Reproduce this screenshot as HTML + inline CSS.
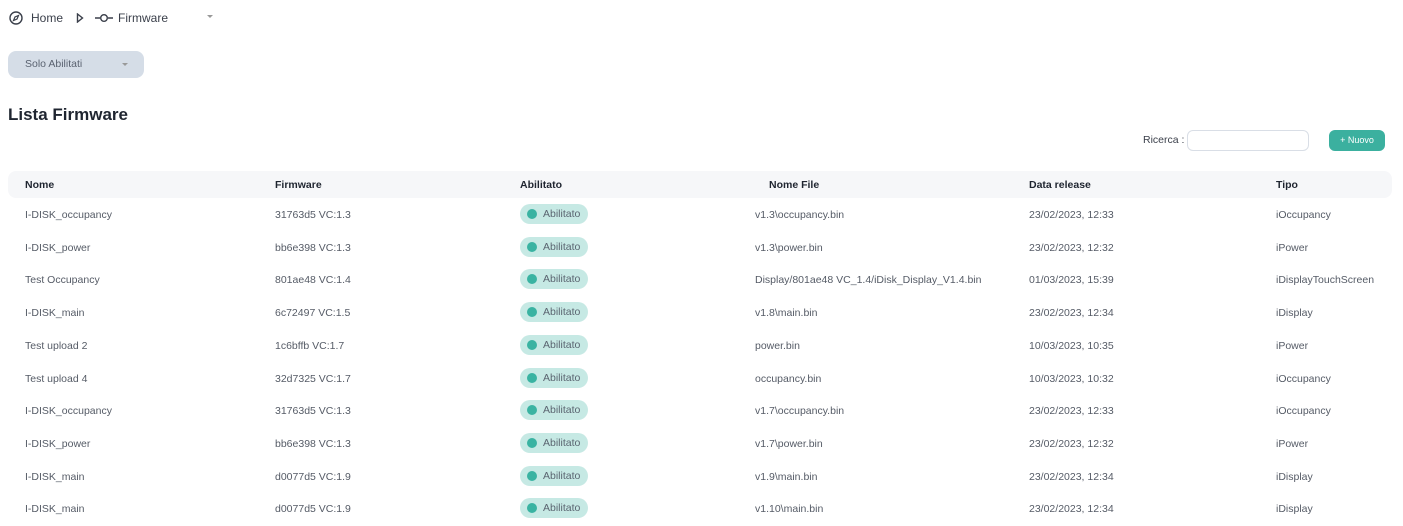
<!DOCTYPE html>
<html><head><meta charset="utf-8"><style>
*{margin:0;padding:0;box-sizing:border-box}
body{width:1403px;height:526px;background:#fff;font-family:"Liberation Sans",sans-serif;color:#555b66;position:relative;overflow:hidden}
.a{position:absolute;white-space:nowrap}
.t{font-size:10.5px;line-height:14px}
.h{font-size:10.5px;font-weight:bold;color:#1f2530;line-height:14px}
.badge{position:absolute;left:520px;width:68px;height:20px;border-radius:10px;background:#c6e9e4}
.badge i{position:absolute;left:7px;top:5px;width:10px;height:10px;border-radius:50%;background:#3ab3a2}
.badge span{position:absolute;left:23px;top:4px;font-size:10.5px;color:#5a6470}
</style></head><body>
<svg class="a" style="left:9px;top:11px" width="14" height="14" viewBox="0 0 14 14"><circle cx="7" cy="7" r="6" fill="none" stroke="#3a3f4a" stroke-width="1.4"/><path d="M9.5 4.5 L8 8 L4.5 9.5 L6 6 Z" fill="none" stroke="#3a3f4a" stroke-width="1.2"/></svg>
<div class="a" style="left:31px;top:11px;font-size:12px;color:#3a3f4a">Home</div>
<svg class="a" style="left:76px;top:13px" width="8" height="10" viewBox="0 0 8 10"><path d="M1.5 1 L6.5 5 L1.5 9 Z" fill="none" stroke="#3a3f4a" stroke-width="1.4"/></svg>
<svg class="a" style="left:95px;top:13px" width="18" height="10" viewBox="0 0 18 10"><path d="M0 5H5M13 5H18" stroke="#3a3f4a" stroke-width="1.4"/><circle cx="9" cy="5" r="3.3" fill="none" stroke="#3a3f4a" stroke-width="1.4"/></svg>
<div class="a" style="left:118px;top:11px;font-size:12px;color:#3a3f4a">Firmware</div>
<div class="a" style="left:207px;top:15px;width:0;height:0;border-left:3px solid transparent;border-right:3px solid transparent;border-top:3px solid #999"></div>
<div class="a" style="left:8px;top:51px;width:136px;height:27px;border-radius:8px;background:#d5dde7"></div>
<div class="a" style="left:25px;top:58px;font-size:10.5px;color:#5a6270">Solo Abilitati</div>
<div class="a" style="left:122px;top:63px;width:0;height:0;border-left:3px solid transparent;border-right:3px solid transparent;border-top:3px solid #999"></div>
<div class="a" style="left:8px;top:105px;font-size:17px;font-weight:bold;color:#1f2530">Lista Firmware</div>
<div class="a" style="left:1143px;top:134px;font-size:10.5px;color:#3a3f4a">Ricerca :</div>
<div class="a" style="left:1187px;top:130px;width:122px;height:21px;border:1px solid #d9dee6;border-radius:6px"></div>
<div class="a" style="left:1329px;top:130px;width:56px;height:21px;border-radius:6px;background:#3bb09f;color:#fff;font-size:9px;text-align:center;line-height:21px">+ Nuovo</div>
<div class="a" style="left:8px;top:171px;width:1384px;height:27px;border-radius:8px;background:#f6f7f9"></div>
<div class="a h" style="left:25px;top:178px">Nome</div>
<div class="a h" style="left:275px;top:178px">Firmware</div>
<div class="a h" style="left:520px;top:178px">Abilitato</div>
<div class="a h" style="left:769px;top:178px">Nome File</div>
<div class="a h" style="left:1029px;top:178px">Data release</div>
<div class="a h" style="left:1276px;top:178px">Tipo</div>
<div id="rows"></div>
<script>
var d=[["I-DISK_occupancy","31763d5 VC:1.3","v1.3\\occupancy.bin","23/02/2023, 12:33","iOccupancy"],
["I-DISK_power","bb6e398 VC:1.3","v1.3\\power.bin","23/02/2023, 12:32","iPower"],
["Test Occupancy","801ae48 VC:1.4","Display/801ae48 VC_1.4/iDisk_Display_V1.4.bin","01/03/2023, 15:39","iDisplayTouchScreen"],
["I-DISK_main","6c72497 VC:1.5","v1.8\\main.bin","23/02/2023, 12:34","iDisplay"],
["Test upload 2","1c6bffb VC:1.7","power.bin","10/03/2023, 10:35","iPower"],
["Test upload 4","32d7325 VC:1.7","occupancy.bin","10/03/2023, 10:32","iOccupancy"],
["I-DISK_occupancy","31763d5 VC:1.3","v1.7\\occupancy.bin","23/02/2023, 12:33","iOccupancy"],
["I-DISK_power","bb6e398 VC:1.3","v1.7\\power.bin","23/02/2023, 12:32","iPower"],
["I-DISK_main","d0077d5 VC:1.9","v1.9\\main.bin","23/02/2023, 12:34","iDisplay"],
["I-DISK_main","d0077d5 VC:1.9","v1.10\\main.bin","23/02/2023, 12:34","iDisplay"]];
var h="",xs=[25,275,755,1029,1276];
d.forEach(function(r,i){var c=214+i*32.7;
[0,1,2,3,4].forEach(function(j){h+='<div class="a t" style="left:'+xs[j]+'px;top:'+(c-6)+'px">'+r[j].replace(/</g,"&lt;")+'</div>';});
h+='<div class="badge" style="top:'+(c-10)+'px"><i></i><span>Abilitato</span></div>';});
document.getElementById("rows").innerHTML=h;
</script>
</body></html>
